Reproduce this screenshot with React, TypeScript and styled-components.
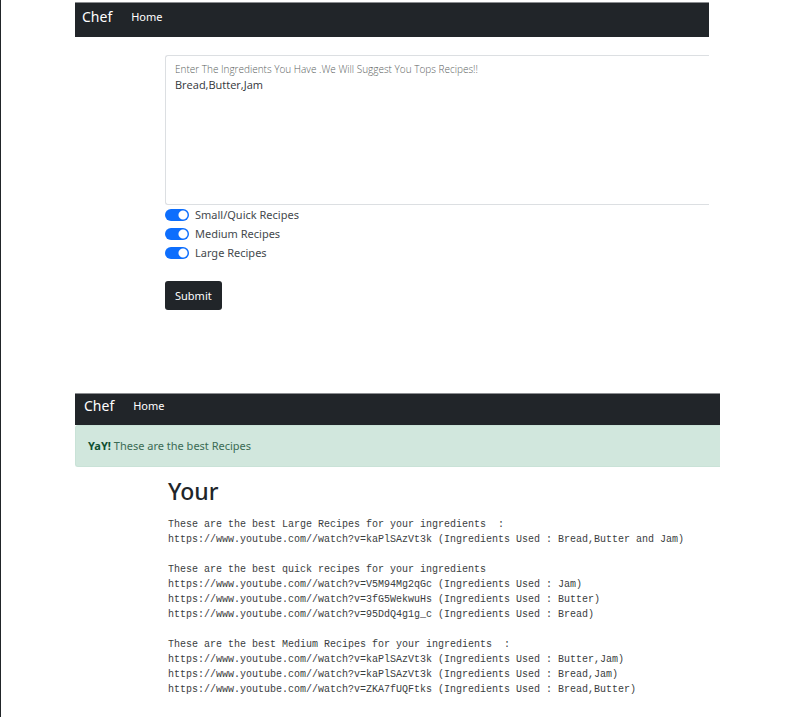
import React, { useState } from 'react';
import styled, { createGlobalStyle } from 'styled-components';

const GlobalStyle = createGlobalStyle`
  *, *::before, *::after { box-sizing: border-box; }
  body {
    margin: 0;
    background: #fff;
    color: #212529;
    font-family: "Noto Sans", "Open Sans", sans-serif;
    font-size: 11px;
  }
`;

const Page = styled.div`
  min-height: 100vh;
  padding: 2px 0 16px 74px;
  border-left: 1px solid #212529;
`;

const Screen = styled.section<{ $gutter: number; $space?: number }>`
  margin-right: ${(p) => p.$gutter}px;
  padding-bottom: ${(p) => p.$space ?? 0}px;
  overflow: hidden;
`;

const Navbar = styled.nav<{ $tall?: boolean }>`
  display: flex;
  align-items: center;
  gap: 19px;
  height: ${(p) => (p.$tall ? 35 : 32)}px;
  padding: 0 ${(p) => (p.$tall ? 7 : 9)}px ${(p) => (p.$tall ? 6 : 7)}px;
  background: #212529;
  border-top: 1px solid #8b8d90;
`;

const Brand = styled.a`
  color: #fff;
  font-size: 14px;
  line-height: 20px;
  text-decoration: none;
`;

const NavLink = styled.a`
  color: #fff;
  font-size: 11px;
  line-height: 16px;
  text-decoration: none;
`;

const Form = styled.form`
  display: flex;
  flex-direction: column;
  align-items: flex-start;
  margin-left: 90px;
  padding-top: 18px;
`;

const Field = styled.div`
  display: flex;
  flex-direction: column;
  align-self: stretch;
  height: 150px;
  padding: 5px 9px;
  border: 1px solid #dcdfe2;
  border-right: 0;
  border-radius: 3px 0 0 3px;
`;

const FieldLabel = styled.label`
  color: #5c5f62;
  font-family: "Open Sans", "Noto Sans", sans-serif;
  font-size: 10px;
  font-weight: 300;
  line-height: 16px;
`;

const Ingredients = styled.textarea`
  flex: 1;
  padding: 0;
  border: 0;
  outline: 0;
  resize: none;
  background: transparent;
  color: #33373b;
  font: inherit;
  font-family: "Open Sans", "Noto Sans", sans-serif;
  line-height: 16px;
`;

const SwitchRow = styled.label`
  display: flex;
  align-items: center;
  gap: 6px;
  height: 19px;
  color: #44484c;
`;

const Switch = styled.input`
  appearance: none;
  width: 24px;
  height: 12px;
  margin: 0;
  border-radius: 6px;
  background: #adb5bd radial-gradient(circle at 6px 6px, #fff 4px, transparent 5px);
  &:checked {
    background: #0d6efd radial-gradient(circle at 18px 6px, #fff 4px, transparent 5px);
  }
`;

const Submit = styled.button`
  height: 29px;
  margin-top: 19px;
  padding: 0 10px;
  border: 0;
  border-radius: 3px;
  background: #212529;
  color: #fff;
  font: inherit;
`;

const Alert = styled.div`
  padding: 12px;
  border: 1px solid #c9e2d7;
  border-right: 0;
  border-radius: 3px 0 0 3px;
  background: #d1e7dd;
  color: #3b6b54;
  line-height: 16px;
  strong { color: #0f5132; }
`;

const Results = styled.div`
  margin-left: 93px;
`;

const Title = styled.h1`
  margin: 8px 0 10px;
  font-size: 23px;
  font-weight: 500;
  line-height: 32px;
`;

const Listing = styled.pre`
  margin: 0;
  color: #3a3d40;
  font-family: "Liberation Mono", monospace;
  font-size: 10px;
  line-height: 15px;
`;

const sizes = ['Small/Quick Recipes', 'Medium Recipes', 'Large Recipes'];

const recipes = `These are the best Large Recipes for your ingredients  :
https://www.youtube.com//watch?v=kaPlSAzVt3k (Ingredients Used : Bread,Butter and Jam)

These are the best quick recipes for your ingredients
https://www.youtube.com//watch?v=V5M94Mg2qGc (Ingredients Used : Jam)
https://www.youtube.com//watch?v=3fG5WekwuHs (Ingredients Used : Butter)
https://www.youtube.com//watch?v=95DdQ4g1g_c (Ingredients Used : Bread)

These are the best Medium Recipes for your ingredients  :
https://www.youtube.com//watch?v=kaPlSAzVt3k (Ingredients Used : Butter,Jam)
https://www.youtube.com//watch?v=kaPlSAzVt3k (Ingredients Used : Bread,Jam)
https://www.youtube.com//watch?v=ZKA7fUQFtks (Ingredients Used : Bread,Butter)`;

function TopBar({ tall }: { tall?: boolean }) {
  return (
    <Navbar $tall={tall}>
      <Brand href="#">Chef</Brand>
      <NavLink href="#">Home</NavLink>
    </Navbar>
  );
}

export default function App() {
  const [text, setText] = useState('Bread,Butter,Jam');
  return (
    <>
      <GlobalStyle />
      <Page>
        <Screen $gutter={92} $space={83}>
          <TopBar tall />
          <Form onSubmit={(e) => e.preventDefault()}>
            <Field>
              <FieldLabel htmlFor="ingredients">
                Enter The Ingredients You Have .We Will Suggest You Tops Recipes!!
              </FieldLabel>
              <Ingredients
                id="ingredients"
                spellCheck={false}
                value={text}
                onChange={(e) => setText(e.target.value)}
              />
            </Field>
            {sizes.map((size) => (
              <SwitchRow key={size}>
                <Switch type="checkbox" role="switch" defaultChecked />
                {size}
              </SwitchRow>
            ))}
            <Submit type="submit">Submit</Submit>
          </Form>
        </Screen>
        <Screen $gutter={81}>
          <TopBar />
          <Alert role="alert">
            <strong>YaY!</strong> These are the best Recipes
          </Alert>
          <Results>
            <Title>Your</Title>
            <Listing>{recipes}</Listing>
          </Results>
        </Screen>
      </Page>
    </>
  );
}
